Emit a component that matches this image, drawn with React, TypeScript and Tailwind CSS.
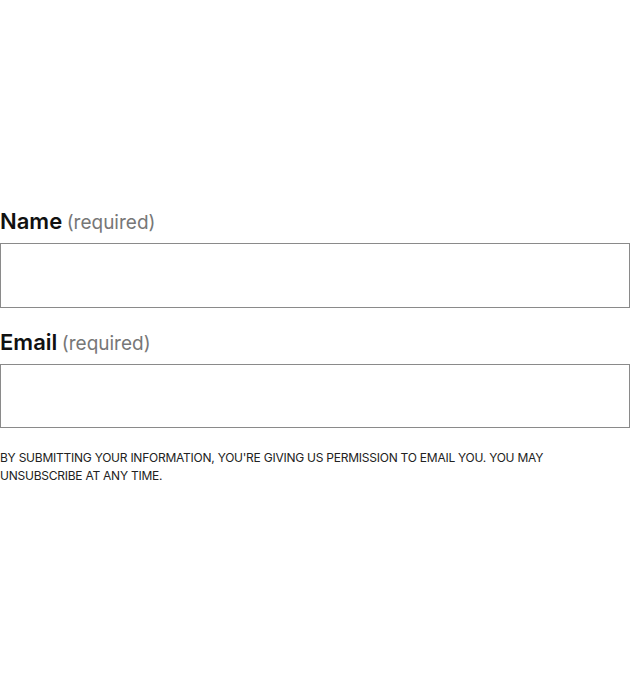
export default function App() {
  return (
    <div className="min-h-screen bg-white pt-[206px]" style={{ fontFamily: "Inter, 'Noto Sans', sans-serif" }}>
      <form className="w-full">
        <div className="mb-[19px]">
          <label className="block h-[30px] leading-[30px] mb-[7px]">
            <span className="text-[22px] font-semibold text-[#111]">Name</span>{" "}
            <span className="text-[19px] text-[#777]">(required)</span>
          </label>
          <input className="block w-full h-[65px] border border-[#8a8a8a] bg-white outline-none px-3" />
        </div>
        <div>
          <label className="block h-[30px] leading-[30px] mb-[7px]">
            <span className="text-[22px] font-semibold text-[#111]">Email</span>{" "}
            <span className="text-[19px] text-[#777]">(required)</span>
          </label>
          <input className="block w-full h-[64px] border border-[#8a8a8a] bg-white outline-none px-3" />
        </div>
        <p className="mt-[21px] pr-[24px] text-[12px] leading-[18px] uppercase text-[#222] tracking-[-0.02em]">
          By submitting your information, you're giving us permission to email you. You may unsubscribe at any time.
        </p>
      </form>
    </div>
  );
}
